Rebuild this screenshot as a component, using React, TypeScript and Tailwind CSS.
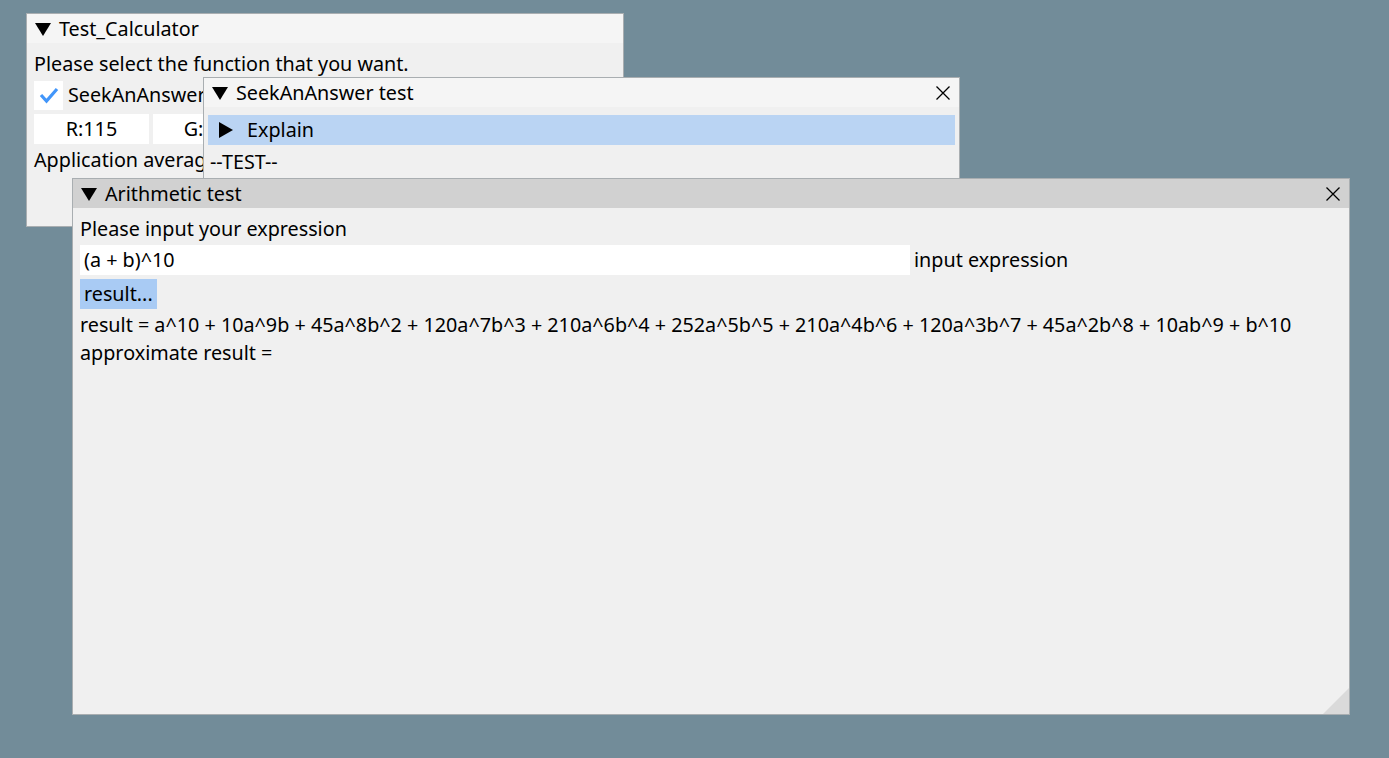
import React from "react";

const font = { fontFamily: '"Noto Sans", "Open Sans", sans-serif' };

function DownArrow() {
  return (
    <svg width="16" height="14" viewBox="0 0 16 14" className="shrink-0">
      <polygon points="0,1 16,1 8,14" fill="#000" />
    </svg>
  );
}

function RightArrow() {
  return (
    <svg width="14" height="16" viewBox="0 0 14 16" className="shrink-0">
      <polygon points="0,0 14,8 0,16" fill="#000" />
    </svg>
  );
}

function CloseX() {
  return (
    <svg width="16" height="16" viewBox="0 0 16 16" className="shrink-0">
      <path d="M1.5 1.5 L14.5 14.5 M14.5 1.5 L1.5 14.5" stroke="#000" strokeWidth="1.3" />
    </svg>
  );
}

function TitleBar({ title, active, closable }: { title: string; active?: boolean; closable?: boolean }) {
  return (
    <div
      className={
        "flex items-center h-[29px] pl-[8px] pr-[8px] gap-[8px] " +
        (active ? "bg-[#d1d1d1]" : "bg-[#f5f5f5]")
      }
    >
      <DownArrow />
      <span className="flex-1 leading-[24px]">{title}</span>
      {closable && <CloseX />}
    </div>
  );
}

export default function App() {
  return (
    <div className="relative w-[1389px] h-[758px] bg-[#728c99] overflow-hidden text-[19.75px] text-black" style={font}>
      {/* Test_Calculator */}
      <div className="absolute left-[26px] top-[13px] w-[598px] h-[214px] border border-[#a9aeb1] bg-[#f0f0f0] flex flex-col">
        <TitleBar title="Test_Calculator" />
        <div className="flex flex-col gap-[4px] px-[7px] pt-[9px]">
          <div className="leading-[24px] h-[24px] whitespace-nowrap">Please select the function that you want.</div>
          <div className="flex items-center gap-[5px] h-[30px]">
            <div className="w-[29px] h-[29px] bg-white flex items-center justify-center">
              <svg width="22" height="18" viewBox="0 0 22 18">
                <polyline points="3,9 8.5,15 19,3" fill="none" stroke="#4296fa" strokeWidth="3.2" />
              </svg>
            </div>
            <span className="leading-[24px] whitespace-nowrap">SeekAnAnswer</span>
            <div className="w-[29px] h-[29px] bg-white ml-[8px]" />
            <span className="leading-[24px] whitespace-nowrap">Arithmetic</span>
          </div>
          <div className="flex gap-[4px]">
            <div className="w-[115px] h-[30px] bg-white flex items-center justify-center leading-[24px]">R:115</div>
            <div className="w-[115px] h-[30px] bg-white flex items-center justify-center leading-[24px]">G:140</div>
            <div className="w-[115px] h-[30px] bg-white flex items-center justify-center leading-[24px]">B:153</div>
          </div>
          <div className="leading-[24px] whitespace-nowrap">Application average 16.667 ms/frame (60.0 FPS)</div>
        </div>
      </div>

      {/* SeekAnAnswer test */}
      <div className="absolute left-[203px] top-[77px] w-[757px] h-[160px] border border-[#a9aeb1] bg-[#f0f0f0] flex flex-col">
        <TitleBar title="SeekAnAnswer test" closable />
        <div className="flex flex-col gap-[4px] px-[4px] pt-[8px]">
          <div className="flex items-center gap-[14px] h-[30px] bg-[#bad4f3] pl-[11px]">
            <RightArrow />
            <span className="leading-[24px]">Explain</span>
          </div>
          <div className="leading-[24px] pl-[2px] pt-[1px]">--TEST--</div>
          <div className="flex items-center gap-[14px] h-[30px] bg-[#bad4f3] pl-[11px]">
            <RightArrow />
            <span className="leading-[24px]">Answer</span>
          </div>
        </div>
      </div>

      {/* Arithmetic test */}
      <div className="absolute left-[72px] top-[178px] w-[1278px] h-[537px] border border-[#a9aeb1] bg-[#f0f0f0] flex flex-col">
        <TitleBar title="Arithmetic test" active closable />
        <div className="flex flex-col gap-[4px] px-[7px] pt-[9px] flex-1">
          <div className="leading-[24px]">Please input your expression</div>
          <div className="flex items-center gap-[4px]">
            <div className="w-[830px] h-[30px] bg-white flex items-center px-[4px] leading-[24px]">(a + b)^10</div>
            <span className="leading-[24px]">input expression</span>
          </div>
          <div className="flex">
            <div className="h-[30px] bg-[#a9cbf4] flex items-center px-[4px] leading-[24px]">result...</div>
          </div>
          <div className="leading-[24px] whitespace-nowrap">
            result = a^10 + 10a^9b + 45a^8b^2 + 120a^7b^3 + 210a^6b^4 + 252a^5b^5 + 210a^4b^6 + 120a^3b^7 + 45a^2b^8 + 10ab^9 + b^10
          </div>
          <div className="leading-[24px]">approximate result =</div>
        </div>
        <svg width="26" height="26" viewBox="0 0 26 26" className="absolute right-0 bottom-0">
          <polygon points="26,0 26,26 0,26" fill="#dadada" />
        </svg>
      </div>
    </div>
  );
}
